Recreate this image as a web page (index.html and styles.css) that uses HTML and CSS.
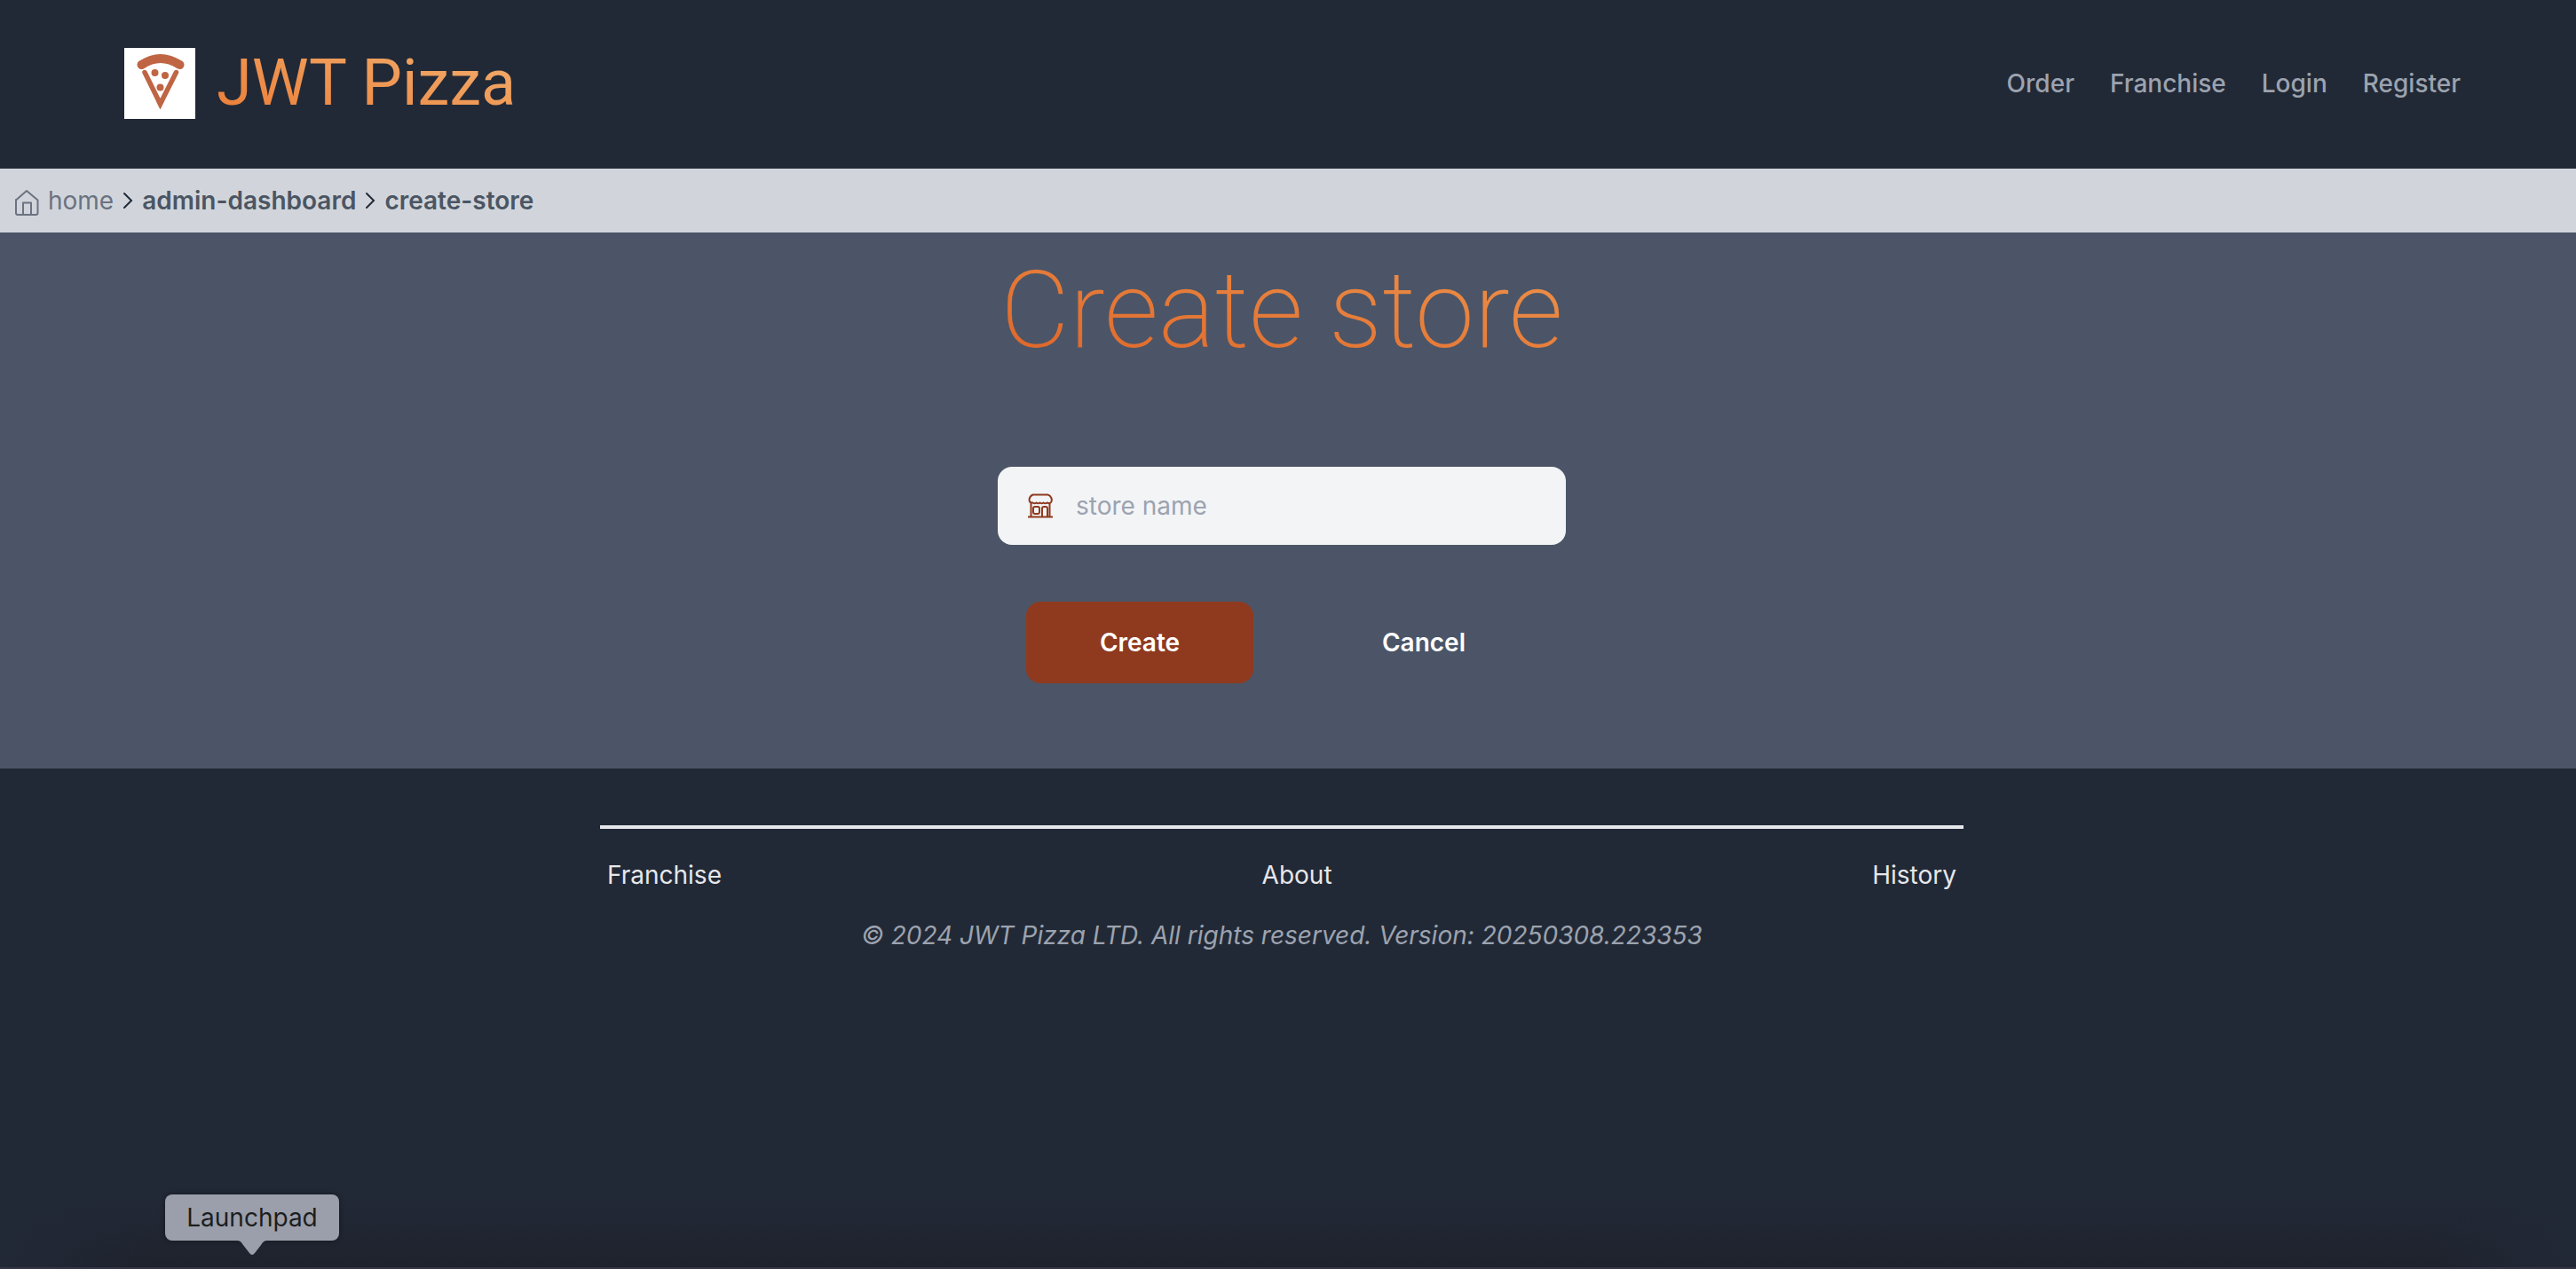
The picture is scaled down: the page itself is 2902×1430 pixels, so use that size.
FILE: index.html
```html
<!DOCTYPE html>
<html lang="en">
<head>
<meta charset="utf-8">
<title>JWT Pizza</title>
<link rel="stylesheet" href="styles.css">
</head>
<body>
<header class="header">
  <div class="brand">
    <svg class="logo" viewBox="0 0 80 80" aria-hidden="true">
      <rect width="80" height="80" fill="#fff"/>
      <g fill="none" stroke="#bf6544">
        <path d="M19.500 19Q40.500 5 62.500 19" stroke-width="10" stroke-linecap="round"/>
        <path d="M23 27.500L40.500 63L58.500 27.500" stroke-width="5.500" stroke-linecap="round"/>
      </g>
      <g fill="#bf6544">
        <path d="M36 60H45L40.500 69z"/>
        <circle cx="34.500" cy="28" r="4"/><circle cx="46" cy="31" r="4"/><circle cx="40.500" cy="44.500" r="4"/>
      </g>
    </svg>
    <span class="brand-name">JWT Pizza</span>
  </div>
  <nav class="nav" aria-label="Main">
    <a href="#order">Order</a>
    <a href="#franchise">Franchise</a>
    <a href="#login">Login</a>
    <a href="#register">Register</a>
  </nav>
</header>

<nav class="crumbs" aria-label="Breadcrumb">
  <a class="home" href="#home">
    <svg class="home-icon" viewBox="0 -5 28 36" aria-hidden="true">
      <path d="M2 12.500L14 2L26.500 12.500V27a2 2 0 0 1-2 2H4a2 2 0 0 1-2-2V12zM10 29V15.500H19V29"/>
    </svg>
    home
  </a>
  <svg class="chevron" viewBox="0 0 12 20" aria-hidden="true"><path d="M2 2L10 10L2 18"/></svg>
  <a class="crumb" href="#admin-dashboard">admin-dashboard</a>
  <svg class="chevron" viewBox="0 0 12 20" aria-hidden="true"><path d="M2 2L10 10L2 18"/></svg>
  <a class="crumb" href="#create-store">create-store</a>
</nav>

<main class="main">
  <h1 class="title">Create store</h1>
  <form class="form">
    <label class="field">
      <svg class="store-icon" viewBox="0 0 28 28" aria-label="Store name">
        <path d="M5.500 1.500H22.500C26 2.500 28 7 26 10Q24.500 12 21.500 10.500Q19.500 12 17.500 10.500Q15.500 12 13.500 10.500Q11.500 12 9.500 10.500Q7.500 12 5.500 10.500Q1.500 11 1.500 7Q2 3 5.500 1.500zM3.500 10V26M24.500 10V26M0 26.500H28M16 26V17q0-2 2-2h2q2 0 2 2V26"/>
        <rect x="6" y="15" width="7" height="8" rx="2"/>
      </svg>
      <input class="input" type="text" placeholder="store name">
    </label>
    <div class="actions">
      <button class="button primary" type="submit">Create</button>
      <button class="button" type="button">Cancel</button>
    </div>
  </form>
</main>

<footer class="footer">
  <div class="footer-inner">
    <nav class="footer-links" aria-label="Footer">
      <a href="#franchise">Franchise</a>
      <a href="#about">About</a>
      <a href="#history">History</a>
    </nav>
    <p class="copyright">© 2024 JWT Pizza LTD. All rights reserved. Version: 20250308.223353</p>
  </div>
</footer>

<div class="dock-shade"></div>
<div class="tooltip" role="tooltip">Launchpad
  <svg class="tip" viewBox="0 0 36 16" aria-hidden="true"><path d="M0 0C5 0 6 2 8 5L15 14Q18 18 21 14L28 5C30 2 31 0 36 0z"/></svg>
</div>
</body>
</html>
```
FILE: styles.css
```css
* { box-sizing: border-box; }

body {
  margin: 0;
  min-height: 100vh;
  position: relative;
  background: #222936;
  font-family: Inter, "Liberation Sans", sans-serif;
  font-size: 28px;
  line-height: 40px;
}

a { color: inherit; text-decoration: none; }

.header {
  display: flex;
  align-items: center;
  justify-content: space-between;
  padding: 46px 130px 48px 140px;
}

.brand { display: flex; align-items: center; gap: 24px; }
.logo { width: 80px; height: 80px; }

.brand-name {
  font-family: Roboto, Inter, sans-serif;
  font-size: 72px;
  line-height: 96px;
  background: linear-gradient(to top right, #ea7a34, #f2b272);
  background-clip: text;
  color: transparent;
}

.nav { display: flex; gap: 40px; color: #9ca3af; font-weight: 500; }

.crumbs {
  display: flex;
  align-items: center;
  gap: 10px;
  padding: 16px;
  background: #d1d5db;
  color: #4b5563;
}

.home { display: flex; align-items: center; gap: 10px; color: #6b7280; }
.crumb { font-weight: 600; }
.home-icon { width: 28px; height: 36px; fill: none; stroke: #6b7280; stroke-width: 2; stroke-linejoin: round; }
.chevron { width: 12px; height: 20px; fill: none; stroke: #1f2937; stroke-width: 2; stroke-linecap: round; }

.main {
  display: flex;
  flex-direction: column;
  align-items: center;
  padding: 24px 14px 96px 0;
  background: #4b5567;
}

.title {
  margin: 0;
  font-family: Roboto, Inter, sans-serif;
  font-size: 120px;
  font-weight: 200;
  line-height: 128px;
  background: linear-gradient(to top right, #dd6428, #ee944c);
  background-clip: text;
  color: transparent;
}

.form { width: 640px; margin-top: 112px; }

.field {
  display: flex;
  align-items: center;
  gap: 26px;
  height: 88px;
  padding: 0 34px;
  border-radius: 16px;
  background: #f3f4f6;
}

.store-icon { flex: none; width: 28px; height: 28px; fill: none; stroke: #8f3a1f; stroke-width: 2; }

.input {
  flex: 1;
  min-width: 0;
  padding: 0;
  border: 0;
  outline: 0;
  background: transparent;
  color: #1f2937;
  font: inherit;
}
.input::placeholder { color: #9ca3af; opacity: 1; }

.actions {
  display: grid;
  grid-template-columns: 256px 256px;
  justify-content: space-between;
  padding: 64px 32px 0;
}

.button {
  height: 92px;
  padding: 0;
  border: 0;
  border-radius: 16px;
  background: transparent;
  color: #fff;
  font: inherit;
  font-weight: 600;
}
.primary { background: #8f3a1f; }

.footer { padding: 64px 14px 64px 0; }

.footer-inner {
  max-width: 1536px;
  margin: 0 auto;
  border-top: 4px solid #e5e7eb;
}

.footer-links {
  display: flex;
  justify-content: space-between;
  padding: 32px 8px 0;
  color: #e5e7eb;
}

.copyright {
  margin: 28px 0 0;
  color: #9ca3af;
  font-style: italic;
  text-align: center;
}

.dock-shade {
  position: absolute;
  right: 0;
  bottom: 0;
  left: 0;
  height: 80px;
  border-bottom: 2px solid #353547;
  background:
    linear-gradient(to right, #222936, #22293600 160px calc(100% - 160px), #222936),
    linear-gradient(#1e222d00, #1e222d);
}

.tooltip {
  position: absolute;
  bottom: 32px;
  left: 186px;
  width: 196px;
  padding: 6px 0;
  border-radius: 8px;
  background: #9b9fab;
  box-shadow: 0 0 6px #0006;
  color: #1c1e20;
  text-align: center;
}

.tip { position: absolute; top: 100%; left: 80px; width: 36px; height: 16px; fill: #9b9fab; }
```
